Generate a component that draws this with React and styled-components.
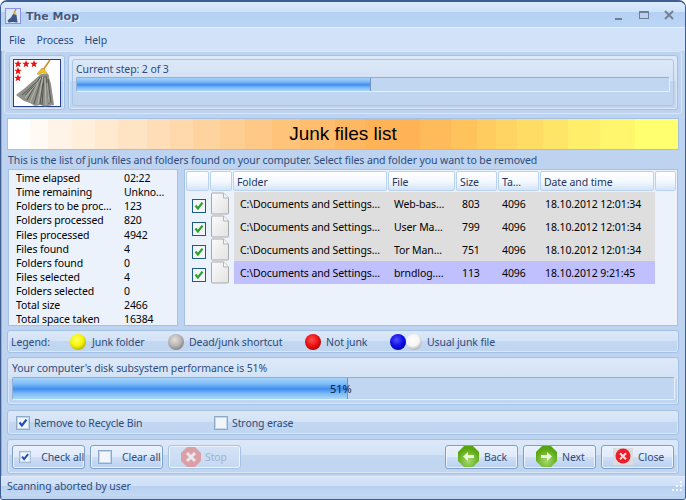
import React from 'react'
import styled, { createGlobalStyle } from 'styled-components'

const Global = createGlobalStyle`
  html, body { margin: 0; padding: 0; background: #fff; }
  * { box-sizing: border-box; }
`
const glass = `linear-gradient(180deg, #dde9f9 0%, #d3e2f6 46%, #c2d7f1 47%, #bfd5f0 100%)`

// the banner is painted in hard colour bands, white > orange > yellow
const bandEdges = [20, 70, 112, 165, 218, 272, 337, 390, 443, 503, 560, 622, 687, 766, 835, 960, 1030, 1090, 1133, 1180, 1240, 1296, 1370, 1450, 1548]
const mix = (a, b, t) => a.map((v, i) => Math.round(v + (b[i] - v) * t))
const bandColor = i => {
  const c = i <= 14
    ? mix([255, 255, 255], [255, 178, 86], i / 14)
    : mix([255, 178, 86], [255, 255, 112], (i - 14) / 9)
  return `rgb(${c.join(',')})`
}
const bands = bandEdges.slice(0, -1).map((e, i) => {
  const pct = x => ((x - 20) / 1528 * 100).toFixed(2)
  return `${bandColor(i)} ${pct(e)}% ${pct(bandEdges[i + 1])}%`
}).join(', ')

const Window = styled.div`
  width: 686px;
  height: 500px;
  display: flex;
  flex-direction: column;
  background: #bdd3ef;
  border: 1px solid #3f5f92;
  border-top-width: 2px;
  border-radius: 7px 7px 3px 3px;
  overflow: hidden;
  font-family: "Noto Sans", "Liberation Sans", sans-serif;
  font-size: 10.5px;
  letter-spacing: -0.1px;
  color: #2f4c7c;
`
const TitleBar = styled.div`
  height: 26px;
  flex: none;
  display: flex;
  align-items: center;
  padding: 3px 4px 0;
  background: linear-gradient(180deg, #dcebfd 0%, #cfe2fa 38%, #b4d0f3 42%, #bcd5f5 100%);
  border-bottom: 1px solid #e4effc;
`
const Title = styled.span`
  margin-left: 5px;
  font-family: "DejaVu Sans", sans-serif;
  font-weight: 700;
  font-size: 11px;
  letter-spacing: 0;
  color: #46587e;
  text-shadow: 1px 1px 1px #f1f6fd;
`
const Caption = styled.div`
  margin-left: auto;
  display: flex;
  gap: 15px;
  margin-right: 7px;
`
const MenuBar = styled.div`
  height: 23px;
  flex: none;
  display: flex;
  align-items: center;
  gap: 11px;
  padding: 0 8px;
  background: #d2e3f9;
  color: #2e4b7a;
`
const Content = styled.div`
  flex: 1;
  display: flex;
  flex-direction: column;
  padding: 0 3px;
  background: #bdd3ef;
  box-shadow: inset 1px 0 0 #8fb0da;
`
const TopRow = styled.div`
  height: 63px;
  display: flex;
  gap: 3px;
  padding: 3px 3px 3px 4px;
  border: 1px solid #d9e6f7;
  border-radius: 3px;
`
const Panel = styled.div`
  border: 1px solid #a3c1e5;
  border-radius: 3px;
  background: ${glass};
  box-shadow: inset 0 0 0 1px #dbe7f7;
`
const LogoBox = styled(Panel)`
  width: 56px;
  flex: none;
  display: flex;
  align-items: center;
  justify-content: center;
`
const StepOuter = styled(Panel)`
  flex: 1;
  padding: 3px;
`
const StepInner = styled.div`
  height: 100%;
  border: 1px solid #a9c6e8;
  border-radius: 3px;
  padding: 1px 3px;
  background: linear-gradient(180deg, #dde8f7 0%, #d2e1f5 46%, #c0d5f0 47%, #bfd5f0 100%);
`
const Track = styled.div`
  position: relative;
  height: ${p => p.$h}px;
  border: 1px solid #8fafd6;
  border-right-color: #e6effa;
  border-bottom-color: #e6effa;
  border-radius: 2px;
  background: #c1d6f0;
  overflow: hidden;
`
const Fill = styled.div`
  height: 100%;
  background: linear-gradient(180deg, #a6d4fb 0%, #7fbcf7 28%, #3f8ef0 52%, #7fbaf6 74%, #a9d6fb 100%);
  border-right: 1px solid #6f93c0;
`
const TrackLabel = styled.span`
  position: absolute;
  left: 317px;
  top: 3px;
  font-size: 11px;
  color: #10203c;
`
const StepLabel = styled.div`
  height: 15px;
  line-height: ${p => p.$lh || 15}px;
  margin-bottom: 1px;
`
const Banner = styled.div`
  height: 32px;
  margin: 4px 3px 0;
  flex: none;
  display: flex;
  align-items: center;
  justify-content: center;
  border: 1px solid #a3c1e5;
  font-family: "Liberation Sans", sans-serif;
  font-size: 19px;
  letter-spacing: 0;
  color: #000;
  background: linear-gradient(90deg, ${bands});
`
const Desc = styled.div`
  height: 19px;
  line-height: 20px;
  margin-left: 4px;
  white-space: nowrap;
`
const Lists = styled.div`
  height: 157px;
  margin: 0 4px;
  display: flex;
  gap: 6px;
`
const Stats = styled.div`
  width: 170px;
  flex: none;
  padding: 1px 0 0 7px;
  background: #ebf2fc;
  border: 1px solid #a3c1e5;
  color: #000;
`
const StatRow = styled.div`
  height: 14.15px;
  line-height: 14px;
  display: flex;
`
const StatName = styled.span`
  width: 108px;
  flex: none;
  white-space: nowrap;
  overflow: hidden;
`
const Table = styled.div`
  flex: 1;
  background: #ebf2fc;
  border: 1px solid #a3c1e5;
  padding: 1px;
  color: #000;
`
const HeaderRow = styled.div`
  display: flex;
  gap: 1px;
  height: 20px;
`
const HeadCell = styled.div`
  width: ${p => p.$w}px;
  flex: none;
  padding-left: 3px;
  line-height: 20px;
  color: #1e3560;
  border: 1px solid #b9d2ef;
  border-radius: 2px;
  background: linear-gradient(180deg, #ffffff 0%, #f3f8fe 55%, #d4e4f8 100%);
  white-space: nowrap;
`
const Row = styled.div`
  display: flex;
  height: 23px;
  margin-top: ${p => (p.$first ? 1 : 0)}px;
`
const CheckCell = styled.div`
  width: 24px;
  flex: none;
  display: flex;
  align-items: center;
  justify-content: center;
  padding-top: 5px;
  padding-left: 2px;
`
const FileCell = styled.div`
  width: 24px;
  flex: none;
  display: flex;
  justify-content: center;
  padding-right: 4px;
`
const DataCell = styled.div`
  width: ${p => p.$w}px;
  flex: none;
  padding-left: ${p => p.$pad}px;
  line-height: 25px;
  white-space: nowrap;
  overflow: hidden;
  background: ${p => (p.$sel ? '#c0c0ff' : '#dedede')};
`
const LegendPanel = styled(Panel)`
  height: 23px;
  margin: 4px 3px 0;
  display: flex;
  align-items: center;
  padding-left: 3px;
`
const LegendLabel = styled.span`
  width: ${p => p.$w}px;
  flex: none;
  margin-left: ${p => p.$m || 0}px;
  white-space: nowrap;
`
const PerfPanel = styled(Panel)`
  height: 48px;
  margin: 4px 3px 0;
  padding: 3px 3px 0 4px;
`
const ChecksPanel = styled(Panel)`
  height: 25px;
  margin: 5px 3px 0;
  display: flex;
  align-items: center;
  padding-left: 8px;
`
const CheckLabel = styled.label`
  display: flex;
  align-items: center;
  gap: 4px;
  width: ${p => p.$w}px;
`
const ButtonPanel = styled(Panel)`
  height: 35px;
  margin: 4px 3px 0;
  display: flex;
  align-items: center;
  gap: 5px;
  padding: 0 4px;
`
const Btn = styled.button`
  width: 73px;
  height: 24px;
  flex: none;
  padding: 0 0 0 ${p => p.$pad}px;
  display: flex;
  align-items: center;
  gap: ${p => p.$gap}px;
  font: inherit;
  letter-spacing: inherit;
  white-space: nowrap;
  color: ${p => (p.disabled ? '#9db2d0' : '#2f4c7c')};
  border: 1px solid ${p => (p.disabled ? '#a9c3e4' : '#7f9fcb')};
  border-radius: 3px;
  background: ${p => (p.disabled
    ? 'linear-gradient(180deg, #d4e2f5, #c6d9f2)'
    : 'linear-gradient(180deg, #e9f1fc 0%, #dfeafa 50%, #cfdff6 51%, #b9d0ef 100%)')};
  box-shadow: inset 0 0 0 1px #eef4fd;
`
const Spacer = styled.div`
  flex: 1;
`
const StatusBar = styled.div`
  height: 20px;
  margin: 2px -3px 0;
  display: flex;
  align-items: center;
  justify-content: space-between;
  padding: 0 2px 2px 6px;
  background: linear-gradient(180deg, #d5e4f8 0%, #cfe0f7 45%, #b9d1f1 50%, #c2d8f4 100%);
  border-top: 1px solid #e0ebfa;
`

const Check = ({ color = '#2ba12b', on = true, dark }) => (
  <svg width="14" height="14" viewBox="0 0 14 14">
    <rect x="0.5" y="0.5" width="13" height="13" fill="#f2f5f9" stroke={dark ? '#1d5a85' : '#8fa9c9'} />
    {!dark && <rect x="1.5" y="1.5" width="11" height="11" fill="none" stroke="#c6d6ea" />}
    {on && <path d="M3.5 6.5l2.4 3L10.5 3.6" fill="none" stroke={color} strokeWidth="2.2" />}
  </svg>
)

const FileIcon = () => (
  <svg width="19" height="23" viewBox="0 0 19 23">
    <defs>
      <linearGradient id="pg" x1="0" x2="1" y1="0" y2="1">
        <stop offset="0" stopColor="#fbfbfb" />
        <stop offset="1" stopColor="#e2e2e2" />
      </linearGradient>
    </defs>
    <path d="M1.5 1h11l5 5v15a1 1 0 0 1-1 1h-15a1 1 0 0 1-1-1V2a1 1 0 0 1 1-1z" fill="url(#pg)" stroke="#a9a9a9" />
    <path d="M12.5 1v5h5" fill="#f4f4f4" stroke="#b5b5b5" />
  </svg>
)

const Ball = ({ id, c1, c2, c3, size = 16 }) => (
  <svg width={size} height={size} viewBox="0 0 16 16" style={{ flex: 'none' }}>
    <defs>
      <radialGradient id={id} cx="0.42" cy="0.36" r="0.72">
        <stop offset="0" stopColor={c1} />
        <stop offset="0.55" stopColor={c2} />
        <stop offset="1" stopColor={c3} />
      </radialGradient>
    </defs>
    <circle cx="8" cy="8" r="8" fill={`url(#${id})`} />
  </svg>
)

const Star = ({ x, y }) => (
  <polygon
    transform={`translate(${x} ${y}) scale(0.4)`}
    points="0,-10 2.6,-3.2 9.5,-3.1 4.1,1.2 5.9,8.1 0,4.2 -5.9,8.1 -4.1,1.2 -9.5,-3.1 -2.6,-3.2"
    fill="#ee1111"
  />
)

const MopLogo = () => (
  <svg width="48" height="48" viewBox="0 0 48 48">
    <rect x="0.5" y="0.5" width="47" height="47" fill="#fff" stroke="#27418a" />
    <Star x={5} y={5} /><Star x={13} y={5} /><Star x={21} y={5} />
    <Star x={5} y={12} /><Star x={5} y={19} />
    <path d="M37 1l-7 10" stroke="#c9912a" strokeWidth="1.6" />
    <path d="M24 15l5-6 2 1 5 7-3 .5-3-4-4 2z" fill="#f0c02c" stroke="#c08f1e" strokeWidth=".6" />
    <path d="M28 15l7 0 3 10 3 21-9 1.500-5-1.500-5 1-5-3-6-2-8-6 9-7 8-7z" fill="#8f918a" />
    <path d="M29 17l-8 28M31 17l-2 29M33 17l3 28M27 18l-13 23M26 21l-17 15M35 20l3 24M24 24l-12 12M30 24l-3 21" stroke="#55584f" strokeWidth="1" fill="none" />
    <path d="M30 17l-5 28M32 19l1 27M25 24l-8 19M28 19l-16 20M34 24l2 20" stroke="#bfc1b8" strokeWidth=".8" fill="none" />
  </svg>
)

const TitleIcon = () => (
  <svg width="16" height="16" viewBox="0 0 16 16">
    <rect x="0.5" y="0.5" width="15" height="15" fill="#dbe6f8" stroke="#8f8ff0" />
    <path d="M11 1l-2 4" stroke="#c69a3a" strokeWidth="1.5" />
    <path d="M8 4.5h3l.5 2-3.500.500z" fill="#e6b83a" />
    <path d="M8 6l3.500 1 1 7.500-5-.500-4 .500-1-2 3.500-3z" fill="#3d5587" />
  </svg>
)

const Octagon = ({ dir }) => (
  <svg width="21" height="21" viewBox="0 0 21 21">
    <defs>
      <radialGradient id={`oc${dir}`} cx="0.5" cy="0.72" r="0.6">
        <stop offset="0" stopColor="#a5d86f" />
        <stop offset="1" stopColor="#58a60e" />
      </radialGradient>
    </defs>
    <polygon points="6,0 15,0 21,6 21,15 15,21 6,21 0,15 0,6" fill={`url(#oc${dir})`} />
    <path
      d={dir === 'l' ? 'M5 10.500l5-4.500v3h6v3h-6v3z' : 'M16 10.500l-5-4.500v3h-6v3h6v3z'}
      fill="#e9f5dd"
    />
  </svg>
)

const StopIcon = () => (
  <svg width="20" height="20" viewBox="0 0 20 20">
    <polygon points="6,0 14,0 20,6 20,14 14,20 6,20 0,14 0,6" fill="#dba0a6" />
    <path d="M6 6l8 8M14 6l-8 8" stroke="#e9e6ec" strokeWidth="3" />
  </svg>
)

const CloseIcon = () => (
  <svg width="20" height="17" viewBox="0 0 20 17">
    <rect width="20" height="17" fill="#dcdcdc" />
    <circle cx="10" cy="8" r="7.500" fill="#ec1c2b" />
    <path d="M7 5.200l6 6M13 5.200l-6 6" stroke="#fbdcdc" strokeWidth="2" />
  </svg>
)

const Grip = () => (
  <svg width="12" height="12" viewBox="0 0 12 12" fill="#f3f7fd">
    <rect x="9" y="1" width="2" height="2" />
    <rect x="5" y="5" width="2" height="2" /><rect x="9" y="5" width="2" height="2" />
    <rect x="1" y="9" width="2" height="2" /><rect x="5" y="9" width="2" height="2" /><rect x="9" y="9" width="2" height="2" />
  </svg>
)

const stats = [
  ['Time elapsed', '02:22'],
  ['Time remaining', 'Unkno…'],
  ['Folders to be proc…', '123'],
  ['Folders processed', '820'],
  ['Files processed', '4942'],
  ['Files found', '4'],
  ['Folders found', '0'],
  ['Files selected', '4'],
  ['Folders selected', '0'],
  ['Total size', '2466'],
  ['Total space taken', '16384'],
]

const heads = [
  ['', 23], ['', 22], ['Folder', 154], ['File', 67], ['Size', 41], ['Ta…', 41], ['Date and time', 114], ['', 21],
]

const files = [
  ['Web-bas…', '803', '18.10.2012 12:01:34'],
  ['User Ma…', '799', '18.10.2012 12:01:34'],
  ['Tor Man…', '751', '18.10.2012 12:01:34'],
  ['brndlog.…', '113', '18.10.2012 9:21:45'],
]

export default function App() {
  return (
    <Window>
      <Global />
      <TitleBar>
        <TitleIcon />
        <Title>The Mop</Title>
        <Caption>
          <svg width="10" height="12" viewBox="0 0 10 12"><rect x="1" y="8" width="7" height="2" fill="#6f7f8f" /></svg>
          <svg width="10" height="12" viewBox="0 0 10 12"><rect x="0.500" y="1.500" width="9" height="7" fill="none" stroke="#6f7f8f" /><rect x="0" y="1" width="10" height="2" fill="#6f7f8f" /></svg>
          <svg width="10" height="12" viewBox="0 0 10 12"><path d="M1 1l8 8M9 1l-8 8" stroke="#6f7f8f" strokeWidth="1.800" /></svg>
        </Caption>
      </TitleBar>
      <MenuBar>
        <span>File</span>
        <span>Process</span>
        <span>Help</span>
      </MenuBar>
      <Content>
        <TopRow>
          <LogoBox><MopLogo /></LogoBox>
          <StepOuter>
            <StepInner>
              <StepLabel $lh={17}>Current step: 2 of 3</StepLabel>
              <Track $h={15}>
                <Fill style={{ width: '49.6%' }} />
              </Track>
            </StepInner>
          </StepOuter>
        </TopRow>
        <Banner>Junk files list</Banner>
        <Desc>This is the list of junk files and folders found on your computer. Select files and folder you want to be removed</Desc>
        <Lists>
          <Stats>
            {stats.map(([k, v]) => (
              <StatRow key={k}>
                <StatName>{k}</StatName>
                <span>{v}</span>
              </StatRow>
            ))}
          </Stats>
          <Table>
            <HeaderRow>
              {heads.map(([h, w], i) => <HeadCell key={i} $w={w}>{h}</HeadCell>)}
            </HeaderRow>
            {files.map(([name, size, date], i) => (
              <Row key={i} $first={i === 0}>
                <CheckCell><Check dark /></CheckCell>
                <FileCell><FileIcon /></FileCell>
                <DataCell $w={155} $pad={6} $sel={i === 3}>C:\Documents and Settings…</DataCell>
                <DataCell $w={67} $pad={5} $sel={i === 3}>{name}</DataCell>
                <DataCell $w={42} $pad={6} $sel={i === 3}>{size}</DataCell>
                <DataCell $w={42} $pad={4} $sel={i === 3}>4096</DataCell>
                <DataCell $w={115} $pad={5} $sel={i === 3}>{date}</DataCell>
              </Row>
            ))}
          </Table>
        </Lists>
        <LegendPanel>
          <LegendLabel $w={59}>Legend:</LegendLabel>
          <Ball id="by" c1="#ffff66" c2="#f4f400" c3="#a8a000" />
          <LegendLabel $w={76} $m={6}>Junk folder</LegendLabel>
          <Ball id="bg" c1="#e4e0e0" c2="#b8b4b4" c3="#7d7878" />
          <LegendLabel $w={116} $m={5}>Dead/junk shortcut</LegendLabel>
          <Ball id="br" c1="#ff5050" c2="#ee1010" c3="#980000" />
          <LegendLabel $w={64} $m={5}>Not junk</LegendLabel>
          <Ball id="bb" c1="#5050ff" c2="#1010e8" c3="#000090" />
          <Ball id="bw" c1="#ffffff" c2="#f4f4f4" c3="#a0a0a0" />
          <LegendLabel $w={80} $m={5}>Usual junk file</LegendLabel>
        </LegendPanel>
        <PerfPanel>
          <StepLabel>Your computer's disk subsystem performance is 51%</StepLabel>
          <Track $h={23}>
            <Fill style={{ width: '50.7%' }} />
            <TrackLabel>51%</TrackLabel>
          </Track>
        </PerfPanel>
        <ChecksPanel>
          <CheckLabel $w={198}><Check color="#1f4fc0" />Remove to Recycle Bin</CheckLabel>
          <CheckLabel $w={120}><Check on={false} />Strong erase</CheckLabel>
        </ChecksPanel>
        <ButtonPanel>
          <Btn $pad={6} $gap={10}><Check color="#1f4fc0" />Check all</Btn>
          <Btn $pad={7} $gap={10}><Check on={false} />Clear all</Btn>
          <Btn $pad={12} $gap={4} disabled><StopIcon />Stop</Btn>
          <Spacer />
          <Btn $pad={12} $gap={5}><Octagon dir="l" />Back</Btn>
          <Btn $pad={12} $gap={5}><Octagon dir="r" />Next</Btn>
          <Btn $pad={11} $gap={5}><CloseIcon />Close</Btn>
        </ButtonPanel>
        <StatusBar>
          <span>Scanning aborted by user</span>
          <Grip />
        </StatusBar>
      </Content>
    </Window>
  )
}
